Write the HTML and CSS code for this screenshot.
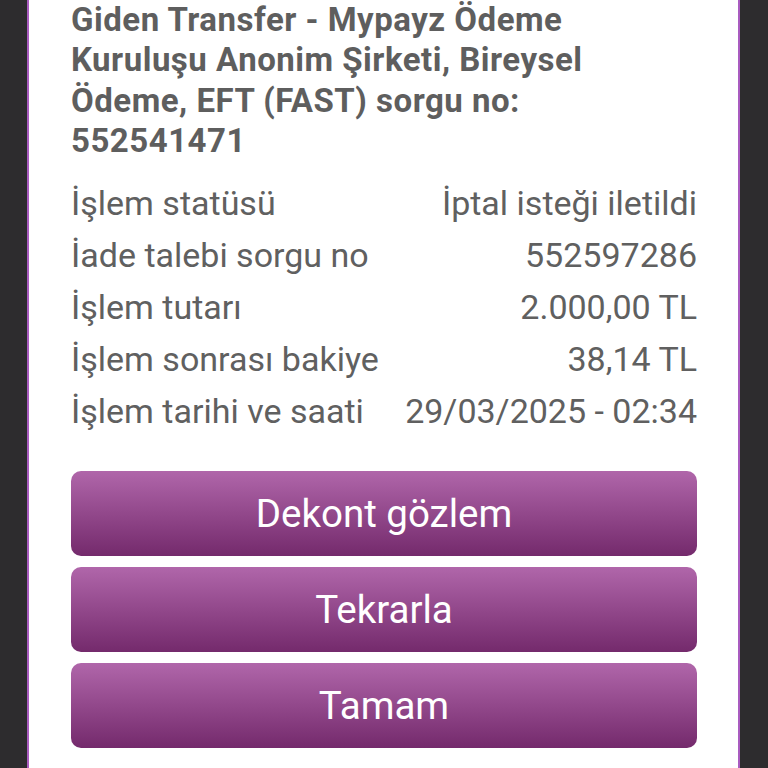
FILE: index.html
```html
<!DOCTYPE html>
<html lang="tr">

<head>
    <meta charset="UTF-8">
    <meta name="viewport" content="width=device-width, initial-scale=1.0">
    <title>İşlem Detayı</title>
    <link rel="stylesheet" href="styles.css">
</head>

<body>
    <div class="panel">
        <h1 class="title">Giden Transfer - Mypayz Ödeme Kuruluşu Anonim Şirketi, Bireysel Ödeme, EFT (FAST) sorgu no: 552541471</h1>

        <div class="details">
            <div class="row"><span>İşlem statüsü</span><span>İptal isteği iletildi</span></div>
            <div class="row"><span>İade talebi sorgu no</span><span>552597286</span></div>
            <div class="row"><span>İşlem tutarı</span><span>2.000,00 TL</span></div>
            <div class="row"><span>İşlem sonrası bakiye</span><span>38,14 TL</span></div>
            <div class="row"><span>İşlem tarihi ve saati</span><span>29/03/2025 - 02:34</span></div>
        </div>

        <div class="actions">
            <button class="btn">Dekont gözlem</button>
            <button class="btn">Tekrarla</button>
            <button class="btn">Tamam</button>
        </div>
    </div>
</body>
</html>
```

FILE: styles.css
```css
/* Page background */
body {
margin: 0;
background: #2d2c2e;
font-family: Roboto, "Noto Sans", sans-serif;
}

/* White sheet with purple edges */
.panel {
margin: 0 28px 0 27px;
min-height: 768px;
box-sizing: border-box;
background: #fff;
border-left: 2px solid #a95cc0;
border-right: 2px solid #a95cc0;
padding: 0 41px 0 42px;
}

/* Transfer title */
.title {
margin: 0;
max-width: 580px;
font-size: 33px;
line-height: 40.3px;
letter-spacing: 0.5px;
font-weight: bold;
color: #5e5e5e;
}

/* Detail rows */
.details {
margin-top: 16px;
}

.row {
display: flex;
justify-content: space-between;
height: 52px;
align-items: center;
font-size: 34px;
color: #606060;
}

/* Buttons */
.actions {
margin-top: 34px;
display: flex;
flex-direction: column;
gap: 11px;
}

.btn {
height: 85px;
border: none;
border-radius: 10px;
background: linear-gradient(#b066aa, #742a6c);
color: #fff;
font-family: Roboto, "Noto Sans", sans-serif;
font-size: 38.5px;
}
```
